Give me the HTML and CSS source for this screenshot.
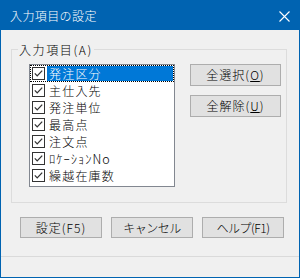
FILE: index.html
```html
<!DOCTYPE html>
<html lang="ja">
<head>
<meta charset="utf-8">
<title>入力項目の設定</title>
<link rel="stylesheet" href="styles.css">
</head>
<body>
<div class="window">
  <div class="titlebar">
    <span class="title">入力項目の設定</span>
    <svg class="close" width="11" height="11" viewBox="0 0 11 11"><path d="M0.5 0.5 L10.5 10.5 M10.5 0.5 L0.5 10.5" stroke="#fff" stroke-width="1.1" fill="none"/></svg>
  </div>
  <div class="client">
    <fieldset class="group">
      <legend class="legend">入力項目(A)</legend>
      <div class="group-body">
        <div class="listbox">
          <div class="row selected focused"><svg class="chk" width="13" height="13" viewBox="0 0 13 13"><rect x="0.5" y="0.5" width="12" height="12" fill="#fff" stroke="#333"/><path d="M2.8 6.4 L5.2 8.9 L10.2 3.6" stroke="#333" stroke-width="1.3" fill="none"/></svg><span class="label">発注区分</span></div>
          <div class="row"><svg class="chk" width="13" height="13" viewBox="0 0 13 13"><rect x="0.5" y="0.5" width="12" height="12" fill="#fff" stroke="#333"/><path d="M2.8 6.4 L5.2 8.9 L10.2 3.6" stroke="#333" stroke-width="1.3" fill="none"/></svg><span class="label">主仕入先</span></div>
          <div class="row"><svg class="chk" width="13" height="13" viewBox="0 0 13 13"><rect x="0.5" y="0.5" width="12" height="12" fill="#fff" stroke="#333"/><path d="M2.8 6.4 L5.2 8.9 L10.2 3.6" stroke="#333" stroke-width="1.3" fill="none"/></svg><span class="label">発注単位</span></div>
          <div class="row"><svg class="chk" width="13" height="13" viewBox="0 0 13 13"><rect x="0.5" y="0.5" width="12" height="12" fill="#fff" stroke="#333"/><path d="M2.8 6.4 L5.2 8.9 L10.2 3.6" stroke="#333" stroke-width="1.3" fill="none"/></svg><span class="label">最高点</span></div>
          <div class="row"><svg class="chk" width="13" height="13" viewBox="0 0 13 13"><rect x="0.5" y="0.5" width="12" height="12" fill="#fff" stroke="#333"/><path d="M2.8 6.4 L5.2 8.9 L10.2 3.6" stroke="#333" stroke-width="1.3" fill="none"/></svg><span class="label">注文点</span></div>
          <div class="row"><svg class="chk" width="13" height="13" viewBox="0 0 13 13"><rect x="0.5" y="0.5" width="12" height="12" fill="#fff" stroke="#333"/><path d="M2.8 6.4 L5.2 8.9 L10.2 3.6" stroke="#333" stroke-width="1.3" fill="none"/></svg><span class="label half">ﾛｹｰｼｮﾝNo</span></div>
          <div class="row"><svg class="chk" width="13" height="13" viewBox="0 0 13 13"><rect x="0.5" y="0.5" width="12" height="12" fill="#fff" stroke="#333"/><path d="M2.8 6.4 L5.2 8.9 L10.2 3.6" stroke="#333" stroke-width="1.3" fill="none"/></svg><span class="label">繰越在庫数</span></div>
        </div>
        <div class="side-buttons">
          <button class="btn side">全選択(<u>O</u>)</button>
          <button class="btn side">全解除(<u>U</u>)</button>
        </div>
      </div>
    </fieldset>
    <div class="footer-buttons">
      <button class="btn foot">設定(F5)</button>
      <button class="btn foot narrow">キャンセル</button>
      <button class="btn foot narrow">ヘルプ(F1)</button>
    </div>
  </div>
  <div class="statusbar"></div>
</div>
</body>
</html>
```
FILE: styles.css
```css
* { box-sizing: border-box; }
html, body { margin: 0; padding: 0; }
body {
  width: 300px;
  height: 278px;
  font-family: "Noto Sans CJK JP", "Noto Sans", sans-serif;
  font-size: 12px;
  font-weight: 300;
  color: #000;
  background: #f0f0f0;
}
.window {
  width: 300px;
  height: 278px;
  border: 1px solid #0063b1;
  background: #f0f0f0;
  display: flex;
  flex-direction: column;
}
.titlebar {
  height: 29px;
  background: #0063b1;
  display: flex;
  align-items: center;
  justify-content: space-between;
  padding: 0 9px 0 9px;
  flex: none;
}
.title {
  color: #fff;
  font-size: 12px;
  line-height: 16px;
  letter-spacing: 0.4px;
}
.close { display: block; margin-top: 1px; }
.client {
  height: 226px;
  flex: none;
  display: flex;
  flex-direction: column;
}
.group {
  margin: 12px 12px 0 10px;
  padding: 0 5px 15px 6px;
  border: 1px solid #dcdcdc;
  min-width: 0;
}
.legend {
  padding: 0 1px;
  line-height: 15px;
  letter-spacing: 1.6px;
}
.group-body {
  margin-top: 7px;
  padding-left: 11px;
  display: flex;
  align-items: flex-start;
}
.listbox {
  width: 146px;
  height: 123px;
  border: 1px solid #828790;
  background: #fff;
  flex: none;
}
.row {
  height: 17px;
  display: flex;
  align-items: center;
  padding-left: 2px;
}
.row.focused {
  outline: 1px dotted #000;
  outline-offset: -1px;
}
.chk { display: block; flex: none; }
.label {
  margin-left: 2px;
  padding-left: 2px;
  height: 17px;
  line-height: 17px;
  letter-spacing: 1.2px;
  flex: 1;
  white-space: nowrap;
}
.label.half { letter-spacing: 1px; font-size: 12.5px; }
.row.selected .label {
  background: #0078d7;
  color: #fff;
  height: 15px;
  line-height: 15px;
  margin-right: 1px;
}
.side-buttons {
  margin-left: 15px;
  display: flex;
  flex-direction: column;
  gap: 9px;
}
.btn {
  font-family: "Noto Sans CJK JP", "Noto Sans", sans-serif;
  font-size: 12px;
  font-weight: 300;
  color: #000;
  background: #e1e1e1;
  border: 1px solid #adadad;
  padding: 0;
  margin: 0;
  letter-spacing: 1px;
  line-height: 14px;
}
.btn u { text-underline-offset: 1px; }
.side {
  width: 91px;
  height: 22px;
}
.footer-buttons {
  margin-top: 14px;
  padding-left: 19px;
  display: flex;
  gap: 9px;
}
.foot {
  width: 82px;
  height: 21px;
}
.foot.narrow { letter-spacing: -0.5px; }
.statusbar {
  flex: 1;
  border-top: 1px solid #dadada;
}
```
